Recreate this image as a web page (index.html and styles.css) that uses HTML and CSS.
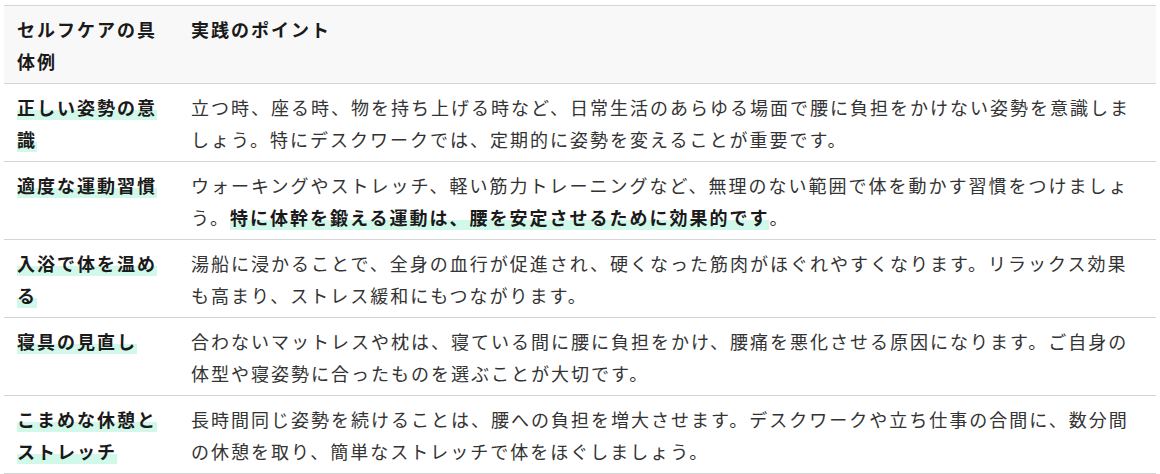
FILE: index.html
```html
<!DOCTYPE html>
<html lang="ja">
<head>
  <meta charset="utf-8">
  <title>セルフケアの具体例</title>
  <link rel="stylesheet" href="styles.css">
</head>
<body>
  <table class="care-table">
    <thead>
      <tr>
        <th class="col-name">セルフケアの具体例</th>
        <th>実践のポイント</th>
      </tr>
    </thead>
    <tbody>
      <tr>
        <td><strong class="mark">正しい姿勢の意識</strong></td>
        <td>立つ時、座る時、物を持ち上げる時など、日常生活のあらゆる場面で腰に負担をかけない姿勢を意識しましょう。特にデスクワークでは、定期的に姿勢を変えることが重要です。</td>
      </tr>
      <tr>
        <td><strong class="mark">適度な運動習慣</strong></td>
        <td>ウォーキングやストレッチ、軽い筋力トレーニングなど、無理のない範囲で体を動かす習慣をつけましょう。<strong class="mark">特に体幹を鍛える運動は、腰を安定させるために効果的です</strong>。</td>
      </tr>
      <tr>
        <td><strong class="mark">入浴で体を温める</strong></td>
        <td>湯船に浸かることで、全身の血行が促進され、硬くなった筋肉がほぐれやすくなります。リラックス効果も高まり、ストレス緩和にもつながります。</td>
      </tr>
      <tr>
        <td><strong class="mark">寝具の見直し</strong></td>
        <td>合わないマットレスや枕は、寝ている間に腰に負担をかけ、腰痛を悪化させる原因になります。ご自身の体型や寝姿勢に合ったものを選ぶことが大切です。</td>
      </tr>
      <tr>
        <td><strong class="mark">こまめな休憩とストレッチ</strong></td>
        <td>長時間同じ姿勢を続けることは、腰への負担を増大させます。デスクワークや立ち仕事の合間に、数分間の休憩を取り、簡単なストレッチで体をほぐしましょう。</td>
      </tr>
    </tbody>
  </table>
</body>
</html>
```

FILE: styles.css
```css
body {
  margin: 5px 4px;
  font-family: "Noto Sans CJK JP", "Noto Sans", sans-serif;
  font-size: 18px;
  color: #333;
  background: #fff;
}
.care-table {
  width: 1152px;
  table-layout: fixed;
  border-collapse: collapse;
  border-top: 1px solid #d4d4d4;
}
.care-table th,
.care-table td {
  padding: 7px 13px 6px;
  text-align: left;
  vertical-align: top;
  line-height: 32px;
  letter-spacing: 2px;
  border-bottom: 1px solid #d4d4d4;
}
.care-table th {
  background-color: #f8f8f8;
  color: #1a1a1a;
  font-weight: bold;
}
.care-table .col-name {
  width: 148px;
}
.mark {
  color: #1a1a1a;
  background: linear-gradient(transparent 60%, #d2f8ea 60%);
}
```
